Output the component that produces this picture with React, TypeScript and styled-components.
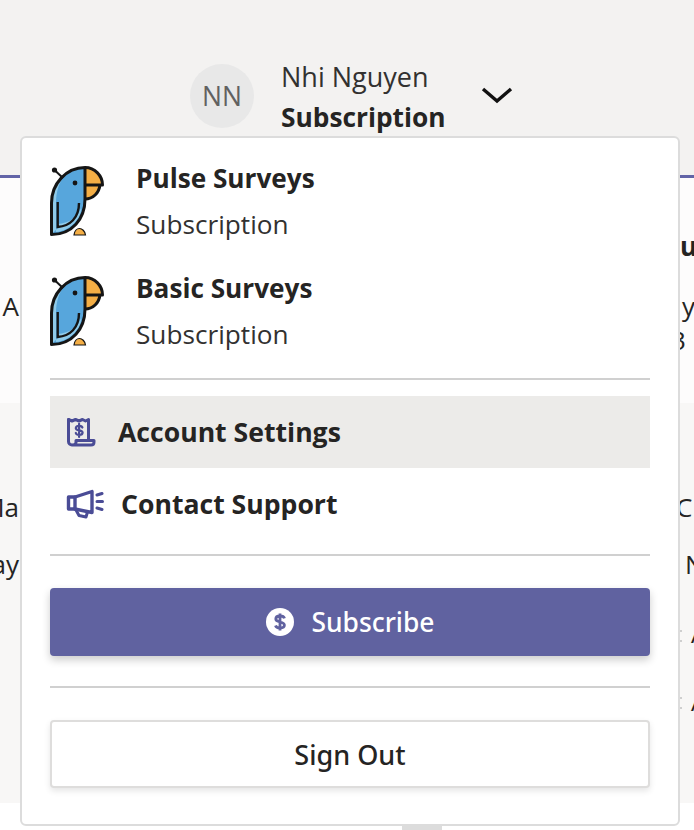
import React from "react";
import styled, { createGlobalStyle } from "styled-components";

const Global = createGlobalStyle`
  html, body { margin: 0; padding: 0; background: #fff; }
  body { font-family: "Open Sans", "Noto Sans", "Liberation Sans", sans-serif; color: #252423; }
`;
const Page = styled.div`
  position: relative;
  width: 694px;
  height: 830px;
  overflow: hidden;
  background: #fff;
`;
const Header = styled.header`
  box-sizing: border-box;
  height: 178px;
  background: #f3f2f1;
  border-bottom: 3px solid #6264a7;
  padding: 59px 0 0 190px;
  display: flex;
  align-items: flex-start;
`;
const Avatar = styled.div`
  width: 64px;
  height: 64px;
  margin-top: 5px;
  border-radius: 50%;
  background: #e8e8e8;
  color: #616161;
  font-size: 26.5px;
  display: flex;
  align-items: center;
  justify-content: center;
`;
const UserText = styled.div`
  margin-left: 27px;
  display: flex;
  flex-direction: column;
`;
const UserName = styled.div`
  font-size: 27px;
  line-height: 36px;
  color: #323130;
`;
const UserPlan = styled.div`
  font-size: 26.3px;
  line-height: 44px;
  font-weight: 700;
  color: #252423;
`;
const Chevron = styled.svg`
  width: 32px;
  height: 18px;
  margin: 27px 0 0 35px;
`;
const Band = styled.section<{ $bg: string; $h: number }>`
  height: ${(p) => p.$h}px;
  background: ${(p) => p.$bg};
  display: flex;
  flex-direction: column;
`;
const Peek = styled.div<{ $h: number; $bold?: boolean }>`
  height: ${(p) => p.$h}px;
  display: grid;
  grid-template-columns: 20px 1fr 14px;
  align-items: end;
  font-size: 26px;
  line-height: 34px;
  font-weight: ${(p) => (p.$bold ? 700 : 400)};
  color: #252423;
  white-space: nowrap;
`;
const PeekLeft = styled.span`
  display: block;
  overflow: hidden;
  direction: rtl;
  text-align: right;
  padding-right: 1px;
`;
const PeekRight = styled.span`
  grid-column: 3;
  display: block;
  overflow: hidden;
  white-space: nowrap;
`;
const PeekInner = styled.span<{ $shift: number }>`
  display: inline-block;
  margin-left: ${(p) => p.$shift}px;
`;
const Dots = styled.span<{ $top: number }>`
  position: absolute;
  left: 680px;
  top: ${(p) => p.$top}px;
  width: 2px;
  height: 12px;
  border-top: 2px dotted #cfcfcf;
  border-bottom: 2px dotted #cfcfcf;
  box-sizing: border-box;
`;
const Card = styled.div`
  position: absolute;
  left: 20px;
  top: 136px;
  box-sizing: border-box;
  width: 660px;
  height: 690px;
  padding: 28px 28px 0;
  background: #fff;
  border: 2px solid #dcdcdc;
  border-radius: 6px;
  display: flex;
  flex-direction: column;
`;
const Product = styled.div`
  height: 110px;
  display: flex;
  align-items: flex-start;
`;
const ProductText = styled.div`
  margin-left: 32px;
  display: flex;
  flex-direction: column;
`;
const ProductName = styled.div`
  font-size: 26.2px;
  line-height: 30px;
  margin-top: -3px;
  font-weight: 700;
`;
const ProductSub = styled.div`
  font-size: 26.2px;
  line-height: 34px;
  margin-top: 14px;
  color: #323130;
`;
const Divider = styled.hr<{ $top: number; $bottom: number }>`
  width: 100%;
  height: 2px;
  border: 0;
  background: #d0d0d0;
  margin: ${(p) => p.$top}px 0 ${(p) => p.$bottom}px;
`;
const MenuRow = styled.div<{ $active?: boolean; $gap: number }>`
  height: 72px;
  padding-left: 16px;
  display: flex;
  align-items: center;
  gap: ${(p) => p.$gap}px;
  background: ${(p) => (p.$active ? "#ecebe9" : "transparent")};
  font-size: 26.6px;
  font-weight: 700;
`;
const Primary = styled.button`
  height: 68px;
  width: 100%;
  border: 0;
  border-radius: 4px;
  background: #6062a0;
  color: #fff;
  box-shadow: 0 4px 8px rgba(0, 0, 0, 0.2);
  font: 500 26.4px "Noto Sans", "Open Sans", sans-serif;
  display: flex;
  align-items: center;
  justify-content: center;
  gap: 16px;
`;
const Secondary = styled.button`
  height: 68px;
  width: 100%;
  box-sizing: border-box;
  border: 2px solid #dedddc;
  border-radius: 4px;
  background: #fff;
  color: #252423;
  box-shadow: 0 3px 6px rgba(0, 0, 0, 0.1);
  font: 500 27px "Noto Sans", "Open Sans", sans-serif;
`;
const Nub = styled.div`
  position: absolute;
  left: 402px;
  top: 826px;
  width: 40px;
  height: 4px;
  background: #dcdcdc;
`;

const BODY = "M35 1.5C16 1.5 1.5 18 1.5 37V68.5C22 68.5 35 53 35 33Z";

const Parrot = () => (
  <svg width="54" height="70" viewBox="0 0 54 70" fill="none">
    <path d={BODY} fill="#57a6dc" />
    <path d="M1.5 37C1.5 24 8 12 16 7C9 16 6 26 6 37V66C20 65 32 52 31 42C28 52 18 57 7.7 58V62L1.5 68.5Z" fill="#8fcbea" />
    <path d="M35 1.5C45 1.5 52.5 10 52.5 19H35Z" fill="#f4ae45" />
    <path d="M35 19H50C49 27 43 33 35 33Z" fill="#f4ae45" />
    <path d={BODY} stroke="#151515" strokeWidth="3" strokeLinejoin="round" />
    <path d="M35 1.5C45 1.5 52.5 10 52.5 19H35M50 19C49 27 43 33 35 33" stroke="#151515" strokeWidth="3" strokeLinejoin="round" />
    <path d="M7.7 36V61C20 60 29 52 29 37" stroke="#151515" strokeWidth="2.4" />
    <circle cx="25" cy="17" r="2.4" fill="#151515" />
    <path d="M13 12L5 4.5" stroke="#151515" strokeWidth="2" />
    <circle cx="4.5" cy="4" r="2.6" fill="#151515" />
    <path d="M24 69C24.5 65 27 62.5 29.5 62.5C32 62.5 35 65 35.5 69Z" fill="#f4ae45" stroke="#151515" strokeWidth="1.2" />
  </svg>
);

const ReceiptIcon = () => (
  <svg width="30" height="30" viewBox="0 0 30 30" fill="none" stroke="#4a4c96" strokeWidth="3" strokeLinecap="round" strokeLinejoin="round">
    <path d="M2.5 2.5L6 4 9.5 2.5 13 4 16.5 2.5 19.5 4 22.5 2.5V22" />
    <path d="M2.5 2.5V24.5C2.5 26.5 4 28 6 28H25C27 28 28 26.5 28 25V23.5H10V25.5C10 27 8 28 6 28" />
    <path d="M16.4 10.5C15.9 9.2 14.4 8.8 13 8.8C11.2 8.8 9.8 9.8 9.8 11.2C9.8 14.2 16.6 12.6 16.6 15.6C16.6 17 15 18 13.1 18C11.6 18 10.2 17.3 9.8 16M13.1 6.8V20" strokeWidth="2.2" />
  </svg>
);

const MegaphoneIcon = () => (
  <svg width="38" height="30" viewBox="0 0 38 30" fill="none" stroke="#4a4c96" strokeWidth="3.4" strokeLinecap="round" strokeLinejoin="round">
    <path d="M2.5 8H9V20H2.5Z" />
    <path d="M9 8L26 2.5V23.5L9 20" />
    <path d="M10 21L13 26.5L20 28L21.5 23" strokeWidth="3" />
    <path d="M31 6L36 4.5M31 12.5H36.5M31 19L36 20.5" strokeWidth="3" />
  </svg>
);

const DollarIcon = () => (
  <svg width="30" height="30" viewBox="0 0 30 30" fill="none">
    <circle cx="15" cy="15" r="14" fill="#fff" />
    <path d="M19.5 11.4C19 9.8 17.2 9 15 9C12.5 9 10.8 10.2 10.8 12C10.8 16 19.4 14 19.4 18C19.4 19.8 17.6 21 15 21C12.7 21 11 20.1 10.5 18.5M15 6.5V23.5" stroke="#6062a0" strokeWidth="2.8" />
  </svg>
);

export default function App() {
  return (
    <Page>
      <Global />
      <Header>
        <Avatar>NN</Avatar>
        <UserText>
          <UserName>Nhi Nguyen</UserName>
          <UserPlan>Subscription</UserPlan>
        </UserText>
        <Chevron viewBox="0 0 32 18" fill="none">
          <path d="M2 3L16 15L30 3" stroke="#111" strokeWidth="3.4" />
        </Chevron>
      </Header>
      <Band $bg="#fdfcfc" $h={225}>
        <Peek $h={85} $bold>
          <span />
          <PeekRight>ur</PeekRight>
        </Peek>
        <Peek $h={60}>
          <PeekLeft>A</PeekLeft>
          <PeekRight>
            <PeekInner $shift={2}>y</PeekInner>
          </PeekRight>
        </Peek>
        <Peek $h={34}>
          <span />
          <PeekRight>
            <PeekInner $shift={-9}>3</PeekInner>
          </PeekRight>
        </Peek>
      </Band>
      <Band $bg="#f8f7f6" $h={400}>
        <Peek $h={121}>
          <PeekLeft>Ma</PeekLeft>
          <PeekRight>
            <PeekInner $shift={-4}>Cl</PeekInner>
          </PeekRight>
        </Peek>
        <Peek $h={57}>
          <PeekLeft>ay</PeekLeft>
          <PeekRight>
            <PeekInner $shift={5}>N</PeekInner>
          </PeekRight>
        </Peek>
        <Peek $h={69}>
          <span />
          <PeekRight>
            <PeekInner $shift={11}>A</PeekInner>
          </PeekRight>
        </Peek>
        <Peek $h={68}>
          <span />
          <PeekRight>
            <PeekInner $shift={11}>A</PeekInner>
          </PeekRight>
        </Peek>
      </Band>
      <Dots $top={630} />
      <Dots $top={697} />
      <Card>
        <Product>
          <Parrot />
          <ProductText>
            <ProductName>Pulse Surveys</ProductName>
            <ProductSub>Subscription</ProductSub>
          </ProductText>
        </Product>
        <Product>
          <Parrot />
          <ProductText>
            <ProductName>Basic Surveys</ProductName>
            <ProductSub>Subscription</ProductSub>
          </ProductText>
        </Product>
        <Divider $top={-8} $bottom={16} />
        <MenuRow $active $gap={22}>
          <ReceiptIcon />
          Account Settings
        </MenuRow>
        <MenuRow $gap={17}>
          <MegaphoneIcon />
          Contact Support
        </MenuRow>
        <Divider $top={14} $bottom={32} />
        <Primary>
          <DollarIcon />
          Subscribe
        </Primary>
        <Divider $top={30} $bottom={32} />
        <Secondary>Sign Out</Secondary>
      </Card>
      <Nub />
    </Page>
  );
}
